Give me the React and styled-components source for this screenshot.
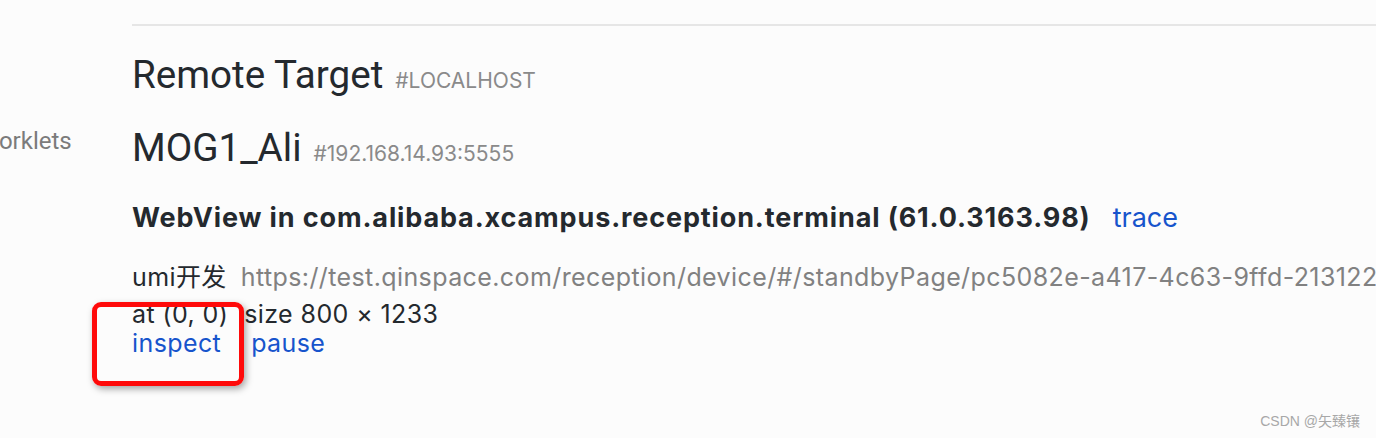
import React from 'react'
import styled, { createGlobalStyle } from 'styled-components'

const GlobalStyle = createGlobalStyle`
  html, body {
    margin: 0;
    padding: 0;
    background: #fcfcfc;
    overflow: hidden;
  }
  body {
    font-family: Inter, "Noto Sans CJK SC", sans-serif;
    color: #24292e;
  }
`

const Page = styled.div`
  display: flex;
  width: 1376px;
  height: 438px;
  overflow: hidden;
  position: relative;
`

const Sidebar = styled.nav`
  width: 132px;
  flex-shrink: 0;
  overflow: hidden;
  padding-top: 127px;
  box-sizing: border-box;
`

const NavItem = styled.div`
  margin-left: -22px;
  font-family: Roboto, sans-serif;
  font-size: 24px;
  line-height: 29px;
  color: #7b7b7b;
  white-space: nowrap;
`

const Main = styled.main`
  flex: 1;
  min-width: 0;
`

const Rule = styled.hr`
  margin: 23px 0 0;
  border: 0;
  height: 2px;
  background: #e6e6e6;
`

const Heading = styled.h1`
  margin: ${p => p.$top}px 0 0;
  font-family: Roboto, sans-serif;
  font-size: 38.6px;
  line-height: 38px;
  font-weight: 400;
  color: #24292e;
  white-space: nowrap;
`

const Sub = styled.span`
  margin-left: 12px;
  font-family: Inter, sans-serif;
  font-size: 21px;
  color: #8a8a8a;
  text-transform: ${p => (p.$upper ? 'uppercase' : 'none')};
`

const TargetCard = styled.div`
  position: relative;
`

const Browser = styled.div`
  display: flex;
  align-items: baseline;
  margin-top: 30px;
  font-size: 27px;
  line-height: 30px;
  white-space: nowrap;
`

const BrowserName = styled.span`
  font-weight: 700;
  letter-spacing: 0.87px;
  color: #24292e;
`

const Row = styled.div`
  display: flex;
  align-items: baseline;
  margin-top: ${p => p.$top || 0}px;
  font-size: 25px;
  line-height: 29px;
  letter-spacing: 0.4px;
  white-space: nowrap;
`

const Label = styled.span`
  color: #24292e;
  margin-right: ${p => p.$gap || 0}px;
`

const Url = styled.span`
  color: #818181;
`

const Action = styled.a`
  color: #1754cc;
  text-decoration: none;
  cursor: pointer;
  margin-left: ${p => p.$left || 0}px;
  margin-right: ${p => p.$gap || 0}px;
`

const Highlight = styled.div`
  position: absolute;
  left: -40px;
  top: 99px;
  width: 152px;
  height: 84px;
  box-sizing: border-box;
  border: 5px solid #ff0a0a;
  border-radius: 9px;
  box-shadow: 2px 3px 7px rgba(0, 0, 0, 0.35);
`

const Watermark = styled.div`
  position: absolute;
  right: 16px;
  bottom: 8px;
  font-size: 14px;
  color: #a8a8a8;
  font-family: "Liberation Sans", "Noto Sans CJK SC", sans-serif;
`

export default function App() {
  return (
    <>
      <GlobalStyle />
      <Page>
        <Sidebar>
          <NavItem>Worklets</NavItem>
        </Sidebar>
        <Main>
          <Row style={{ marginTop: -28 }}>
            <Action $gap={30}>inspect</Action>
            <Action>pause</Action>
          </Row>
          <Rule />
          <Heading $top={30}>
            Remote Target<Sub $upper>#localhost</Sub>
          </Heading>
          <Heading $top={29}>
            MOG1_Ali<Sub>#192.168.14.93:5555</Sub>
          </Heading>
          <TargetCard>
            <Browser>
              <BrowserName>WebView in com.alibaba.xcampus.reception.terminal (61.0.3163.98)</BrowserName>
              <Action $left={22}>trace</Action>
            </Browser>
            <Row $top={30}>
              <Label $gap={14}>umi开发</Label>
              <Url>https://test.qinspace.com/reception/device/#/standbyPage/pc5082e-a417-4c63-9ffd-2131221a3f90</Url>
            </Row>
            <Row $top={8}>
              <Label $gap={16}>at (0, 0)</Label>
              <Label>size 800 × 1233</Label>
            </Row>
            <Row>
              <Action $gap={30}>inspect</Action>
              <Action>pause</Action>
            </Row>
            <Highlight />
          </TargetCard>
        </Main>
        <Watermark>CSDN @矢臻镶</Watermark>
      </Page>
    </>
  )
}
